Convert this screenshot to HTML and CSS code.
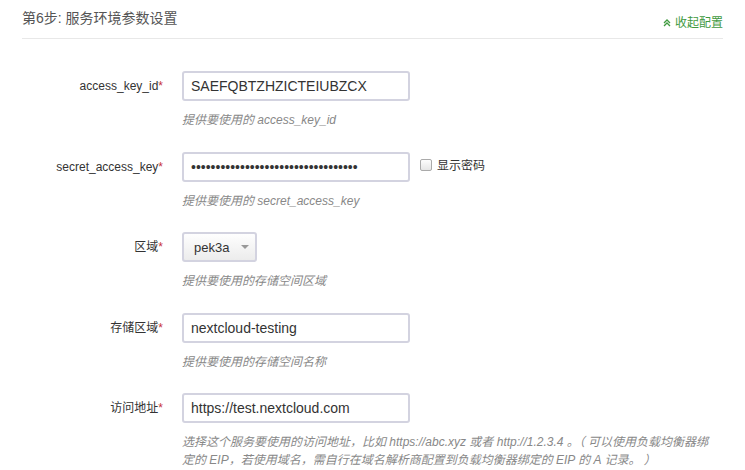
FILE: index.html
```html
<!DOCTYPE html>
<html lang="zh-CN">
<head>
<meta charset="utf-8">
<link rel="stylesheet" href="styles.css">
</head>
<body>
<div class="panel">
  <div class="header">
    <h3 class="title">第6步: 服务环境参数设置</h3>
    <a class="toggle" href="#">
      <svg class="chev" width="8" height="8" viewBox="0 0 8 8"><path d="M1 4 L4 1 L7 4 M1 7 L4 4 L7 7" fill="none" stroke="#3f9a3f" stroke-width="1.3"/></svg>
      收起配置
    </a>
  </div>
  <div class="form">
    <div class="row">
      <label class="label">access_key_id<span class="req">*</span></label>
      <div class="field">
        <input class="input" type="text" value="SAEFQBTZHZICTEIUBZCX">
        <div class="help">提供要使用的 access_key_id</div>
      </div>
    </div>
    <div class="row">
      <label class="label">secret_access_key<span class="req">*</span></label>
      <div class="field">
        <div class="inline">
          <input class="input" type="password" value="abcdefghijabcdefghijabcdefghijabcd">
          <label class="check"><span class="box"></span>显示密码</label>
        </div>
        <div class="help">提供要使用的 secret_access_key</div>
      </div>
    </div>
    <div class="row">
      <label class="label">区域<span class="req">*</span></label>
      <div class="field">
        <div class="select">pek3a<span class="caret"></span></div>
        <div class="help">提供要使用的存储空间区域</div>
      </div>
    </div>
    <div class="row">
      <label class="label">存储区域<span class="req">*</span></label>
      <div class="field">
        <input class="input" type="text" value="nextcloud-testing">
        <div class="help">提供要使用的存储空间名称</div>
      </div>
    </div>
    <div class="row">
      <label class="label">访问地址<span class="req">*</span></label>
      <div class="field">
        <input class="input" type="text" value="https://test.nextcloud.com">
        <div class="help">选择这个服务要使用的访问地址，比如 https://abc.xyz 或者 http://1.2.3.4 。（ 可以使用负载均衡器绑定的 EIP，若使用域名，需自行在域名解析商配置到负载均衡器绑定的 EIP 的 A 记录。 ）</div>
      </div>
    </div>
  </div>
</div>
</body>
</html>
```
FILE: styles.css
```css
* { box-sizing: border-box; }
html, body { margin: 0; padding: 0; background: #fff; }
body {
  font-family: "Liberation Sans", Arial, "Noto Sans CJK SC", sans-serif;
  color: #333;
  width: 745px;
  height: 470px;
  overflow: hidden;
}
.panel { padding: 0 22px 0 22px; }
.header {
  display: flex;
  justify-content: space-between;
  align-items: flex-start;
  height: 39px;
  border-bottom: 1px solid #e8e8e8;
}
.title {
  margin: 0;
  padding-top: 9px;
  font-size: 14px;
  font-weight: normal;
  line-height: 18px;
  color: #555;
}
.toggle {
  padding-top: 14px;
  font-size: 12px;
  line-height: 18px;
  color: #3f9a3f;
  text-decoration: none;
  display: flex;
  align-items: center;
  gap: 4px;
}
.chev { display: block; }
.form { padding-top: 32px; }
.row {
  display: flex;
  align-items: flex-start;
  height: 80.5px;
}
.label {
  width: 141px;
  flex: none;
  text-align: right;
  font-size: 12px;
  line-height: 30px;
  color: #333;
  margin-right: 19px;
}
.req { color: #c7343b; font-size: 12px; }
.field { width: 538px; flex: none; }
.inline { display: flex; align-items: center; }
.input {
  display: block;
  width: 228px;
  height: 30px;
  border: 2px solid #d3d3e0;
  border-radius: 3px;
  padding: 0 7px;
  font-family: "Liberation Sans", Arial, sans-serif;
  font-size: 14px;
  color: #333;
  background: #fff;
  outline: none;
}
.check {
  display: flex;
  align-items: center;
  margin-left: 10px;
  font-size: 12px;
  color: #333;
  margin-top: -4px;
}
.box {
  width: 12px;
  height: 12px;
  border: 1px solid #aaa;
  border-radius: 2px;
  background: linear-gradient(#fdfdfd, #e6e6e6);
  margin-right: 5px;
}
.select {
  display: flex;
  align-items: center;
  width: 75px;
  height: 30px;
  border: 2px solid #d3d3e0;
  border-radius: 3px;
  padding-left: 10px;
  font-size: 13px;
  color: #333;
  background: linear-gradient(#fefefe, #ececec);
}
.caret {
  margin-left: 12px;
  width: 0;
  height: 0;
  border-left: 4px solid transparent;
  border-right: 4px solid transparent;
  border-top: 4px solid #999;
}
.help {
  margin-top: 10px;
  font-size: 12px;
  line-height: 18px;
  font-style: italic;
  color: #888;
}
```
